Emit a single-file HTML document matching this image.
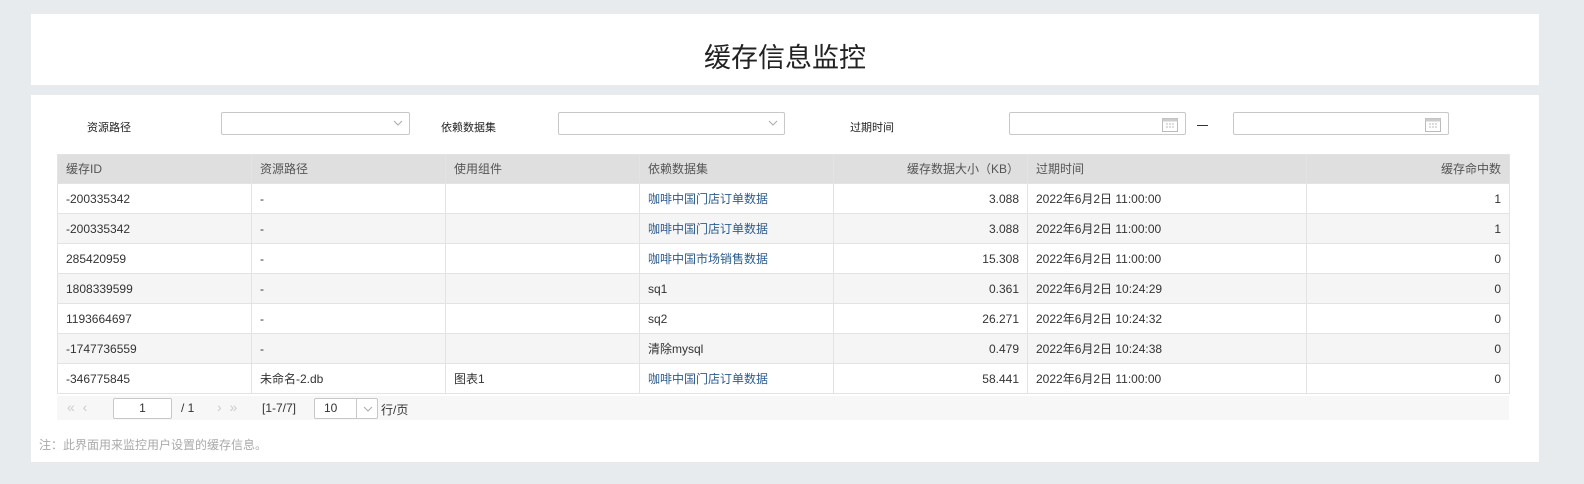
<!DOCTYPE html><html><head><meta charset="utf-8"><style>
body{margin:0;width:1584px;height:484px;background:#e8ebee;font-family:"Liberation Sans","Noto Sans CJK SC",sans-serif;position:relative;overflow:hidden}
.p{position:absolute;background:#fff;left:31px;width:1508px}
.t{position:absolute;font-size:11px;color:#222}
.inp{position:absolute;height:23px;border:1px solid #c8c8c8;border-radius:2px;background:#fff;box-sizing:border-box}
table{position:absolute;left:57px;top:154px;border-collapse:collapse;font-size:12px;color:#333;table-layout:fixed;width:1452px}
td{height:30px;border:1px solid #e3e3e3;padding:0 8px;box-sizing:border-box;white-space:nowrap;vertical-align:middle;line-height:14px}
tr.h td{background:#dfdfdf;color:#555;height:29px}
tr:nth-child(odd):not(.h) td{background:#f5f5f5}
.r{text-align:right}.b{color:#2d5b8c}
</style></head><body>
<div class="p" style="top:14px;height:71px"><div style="position:absolute;left:0;right:0;top:22px;text-align:center;font-size:27px;color:#222">缓存信息监控</div></div>
<div class="p" style="top:95px;height:367px"></div>
<div class="t" style="left:87px;top:119px">资源路径</div>
<div class="inp" style="left:221px;top:112px;width:189px"><svg style="position:absolute;right:6px;top:7px" width="10" height="7"><path d="M1 1l4 4 4-4" fill="none" stroke="#aaa"/></svg></div>
<div class="t" style="left:441px;top:119px">依赖数据集</div>
<div class="inp" style="left:558px;top:112px;width:227px"><svg style="position:absolute;right:6px;top:7px" width="10" height="7"><path d="M1 1l4 4 4-4" fill="none" stroke="#aaa"/></svg></div>
<div class="t" style="left:850px;top:119px">过期时间</div>
<div class="inp" style="left:1009px;top:112px;width:177px"><svg style="position:absolute;right:7px;top:4px" width="16" height="15"><rect x="0.5" y="1.5" width="15" height="13" fill="none" stroke="#bbb"/><rect x="0.5" y="1.5" width="15" height="3" fill="#ccc"/><path d="M4 7h2M7 7h2M10 7h2M4 10h2M7 10h2M10 10h2" stroke="#bbb"/></svg></div>
<div style="position:absolute;left:1197px;top:125px;width:11px;height:1px;background:#333"></div>
<div class="inp" style="left:1233px;top:112px;width:216px"><svg style="position:absolute;right:7px;top:4px" width="16" height="15"><rect x="0.5" y="1.5" width="15" height="13" fill="none" stroke="#bbb"/><rect x="0.5" y="1.5" width="15" height="3" fill="#ccc"/><path d="M4 7h2M7 7h2M10 7h2M4 10h2M7 10h2M10 10h2" stroke="#bbb"/></svg></div>
<table>
<colgroup><col style="width:194px"><col style="width:194px"><col style="width:194px"><col style="width:194px"><col style="width:194px"><col style="width:279px"><col style="width:203px"></colgroup>
<tr class="h"><td>缓存ID</td><td>资源路径</td><td>使用组件</td><td>依赖数据集</td><td class="r">缓存数据大小（KB）</td><td>过期时间</td><td class="r">缓存命中数</td></tr>
<tr><td>-200335342</td><td>-</td><td></td><td class="b">咖啡中国门店订单数据</td><td class="r">3.088</td><td>2022年6月2日 11:00:00</td><td class="r">1</td></tr>
<tr><td>-200335342</td><td>-</td><td></td><td class="b">咖啡中国门店订单数据</td><td class="r">3.088</td><td>2022年6月2日 11:00:00</td><td class="r">1</td></tr>
<tr><td>285420959</td><td>-</td><td></td><td class="b">咖啡中国市场销售数据</td><td class="r">15.308</td><td>2022年6月2日 11:00:00</td><td class="r">0</td></tr>
<tr><td>1808339599</td><td>-</td><td></td><td>sq1</td><td class="r">0.361</td><td>2022年6月2日 10:24:29</td><td class="r">0</td></tr>
<tr><td>1193664697</td><td>-</td><td></td><td>sq2</td><td class="r">26.271</td><td>2022年6月2日 10:24:32</td><td class="r">0</td></tr>
<tr><td>-1747736559</td><td>-</td><td></td><td>清除mysql</td><td class="r">0.479</td><td>2022年6月2日 10:24:38</td><td class="r">0</td></tr>
<tr><td>-346775845</td><td>未命名-2.db</td><td>图表1</td><td class="b">咖啡中国门店订单数据</td><td class="r">58.441</td><td>2022年6月2日 11:00:00</td><td class="r">0</td></tr>
</table>
<div style="position:absolute;left:57px;top:396px;width:1452px;height:24px;background:#f7f7f7;font-size:12px;color:#333">
<span style="position:absolute;left:10px;top:3px;color:#ccc;font-size:14px">«&nbsp;&nbsp;‹</span>
<div class="inp" style="left:56px;top:2px;width:59px;height:21px;text-align:center;line-height:19px">1</div>
<span style="position:absolute;left:124px;top:5px">/ 1</span>
<span style="position:absolute;left:160px;top:3px;color:#ccc;font-size:14px">›&nbsp;&nbsp;»</span>
<span style="position:absolute;left:205px;top:5px">[1-7/7]</span>
<div class="inp" style="left:257px;top:2px;width:64px;height:21px;line-height:19px;padding-left:9px">10<span style="position:absolute;left:41px;top:0;bottom:0;border-left:1px solid #c8c8c8;width:22px"><svg style="position:absolute;left:6px;top:7px" width="10" height="7"><path d="M1 1l4 4 4-4" fill="none" stroke="#aaa"/></svg></span></div>
<span style="position:absolute;left:324px;top:5px">行/页</span>
</div>
<div style="position:absolute;left:39px;top:436px;font-size:12px;color:#aaa">注：此界面用来监控用户设置的缓存信息。</div>
</body></html>
